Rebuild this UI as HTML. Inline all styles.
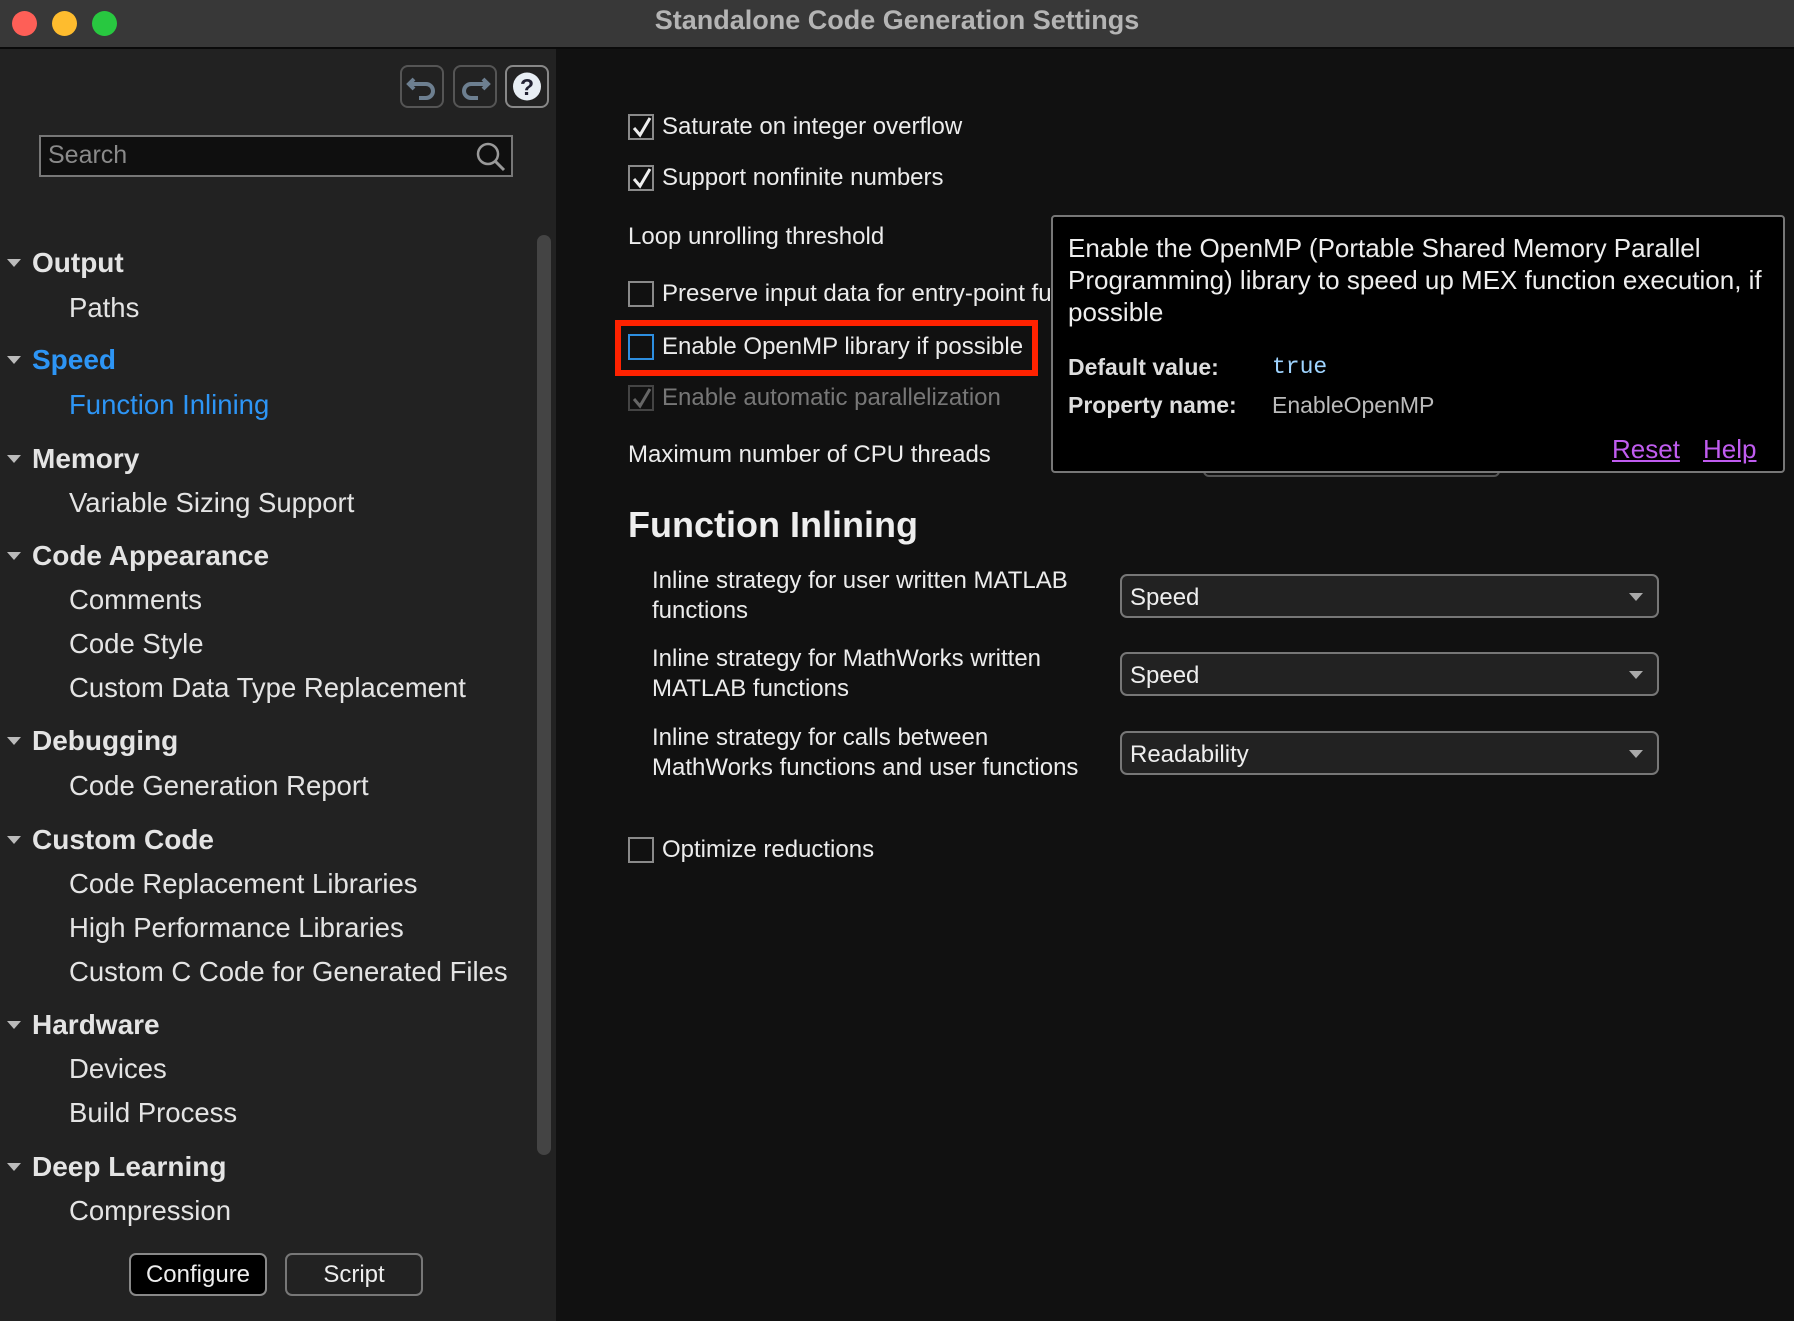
<!DOCTYPE html>
<html><head><meta charset="utf-8"><style>
*{margin:0;padding:0;box-sizing:border-box}
body{width:1794px;height:1321px;background:#111;font-family:"Liberation Sans",sans-serif;position:relative;overflow:hidden;color:#e6e6e6}
.a{position:absolute;white-space:nowrap}
#title{left:0;top:0;width:1794px;height:49px;background:#383838;border-bottom:2px solid #0a0a0a}
.dot{position:absolute;top:11px;width:25px;height:25px;border-radius:50%}
#side{left:0;top:49px;width:556px;height:1272px;background:#222}
.h{font-size:28px;font-weight:bold;color:#e4e4e4;left:32px;transform:translateY(-50%)}
.s{font-size:27.5px;color:#e4e4e4;left:69px;transform:translateY(-50%)}
.tri{position:absolute;left:7px;width:0;height:0;border-left:7px solid transparent;border-right:7px solid transparent;border-top:8px solid #bbb}
.m{font-size:24px;color:#ececec;transform:translateY(-50%)}
.cb{position:absolute;width:26px;height:26px;border:2px solid #8a8a8a;background:#111}
.cb svg{position:absolute;left:1px;top:0}
.dd{position:absolute;left:1120px;width:539px;height:44px;border:2px solid #777;border-radius:7px;background:#222;font-size:24px;color:#eee;padding:8px 8px}
.dd:after{content:"";position:absolute;right:14px;top:17px;border-left:7px solid transparent;border-right:7px solid transparent;border-top:8px solid #aaa}
.btn{position:absolute;width:44px;height:43px;border:2px solid #555;border-radius:8px}
</style></head><body>
<div id="title" class="a">
<div class="dot" style="left:12px;background:#fe5f57"></div>
<div class="dot" style="left:52px;background:#febc2e"></div>
<div class="dot" style="left:92px;background:#28c840"></div>
<div class="a" style="left:0;width:1794px;text-align:center;top:5px;font-size:27px;font-weight:bold;color:#b4b4b4">Standalone Code Generation Settings</div>
</div>
<div id="side" class="a"></div>
<div class="btn" style="left:400px;top:65px"><svg width="40" height="39" viewBox="0 0 40 39"><path d="M12 12 L7 17 L12 22 M7 17 H24 a7 7 0 0 1 0 14 H17" fill="none" stroke="#6d7f90" stroke-width="4"/></svg></div>
<div class="btn" style="left:453px;top:65px"><svg width="40" height="39" viewBox="0 0 40 39"><path d="M28 12 L33 17 L28 22 M33 17 H16 a7 7 0 0 0 0 14 H23" fill="none" stroke="#6d7f90" stroke-width="4"/></svg></div>
<div class="btn" style="left:505px;top:65px;border-color:#888"><svg width="40" height="39" viewBox="0 0 40 39"><circle cx="20" cy="19.5" r="14" fill="#e8eef4"/><text x="20" y="28" text-anchor="middle" font-size="23" font-weight="bold" fill="#223" font-family="Liberation Sans">?</text></svg></div>
<div class="a" style="left:39px;top:135px;width:474px;height:42px;border:2px solid #777;background:#0f0f0f"></div>
<div class="a" style="left:48px;top:141px;font-size:25px;color:#8a8a8a">Search</div>
<svg class="a" style="left:474px;top:140px" width="34" height="34" viewBox="0 0 34 34"><circle cx="14" cy="14" r="10" fill="none" stroke="#999" stroke-width="2.5"/><path d="M21 21 L30 30" stroke="#999" stroke-width="3"/></svg>
<div class="a" style="left:537px;top:235px;width:14px;height:920px;border-radius:7px;background:#444"></div>

<div class="tri" style="top:259px"></div><div class="a h" style="top:263px">Output</div>
<div class="a s" style="top:308px">Paths</div>
<div class="tri" style="top:356px"></div><div class="a h" style="top:360px;color:#2d95f5">Speed</div>
<div class="a s" style="top:405px;color:#2d95f5">Function Inlining</div>
<div class="tri" style="top:455px"></div><div class="a h" style="top:459px">Memory</div>
<div class="a s" style="top:503px">Variable Sizing Support</div>
<div class="tri" style="top:552px"></div><div class="a h" style="top:556px">Code Appearance</div>
<div class="a s" style="top:600px">Comments</div>
<div class="a s" style="top:644px">Code Style</div>
<div class="a s" style="top:688px">Custom Data Type Replacement</div>
<div class="tri" style="top:737px"></div><div class="a h" style="top:741px">Debugging</div>
<div class="a s" style="top:786px">Code Generation Report</div>
<div class="tri" style="top:836px"></div><div class="a h" style="top:840px">Custom Code</div>
<div class="a s" style="top:884px">Code Replacement Libraries</div>
<div class="a s" style="top:928px">High Performance Libraries</div>
<div class="a s" style="top:972px">Custom C Code for Generated Files</div>
<div class="tri" style="top:1021px"></div><div class="a h" style="top:1025px">Hardware</div>
<div class="a s" style="top:1069px">Devices</div>
<div class="a s" style="top:1113px">Build Process</div>
<div class="tri" style="top:1163px"></div><div class="a h" style="top:1167px">Deep Learning</div>
<div class="a s" style="top:1211px">Compression</div>
<div class="a" style="left:129px;top:1253px;width:138px;height:43px;border:2px solid #888;border-radius:7px;background:#000;font-size:24px;text-align:center;line-height:39px;color:#eee">Configure</div>
<div class="a" style="left:285px;top:1253px;width:138px;height:43px;border:2px solid #777;border-radius:7px;background:#222;font-size:24px;text-align:center;line-height:39px;color:#eee">Script</div>

<!-- main -->
<div class="cb" style="left:628px;top:114px"><svg width="22" height="22"><path d="M3 12 L9 19 L19 2" fill="none" stroke="#eee" stroke-width="3"/></svg></div>
<div class="a m" style="left:662px;top:127px">Saturate on integer overflow</div>
<div class="cb" style="left:628px;top:165px"><svg width="22" height="22"><path d="M3 12 L9 19 L19 2" fill="none" stroke="#eee" stroke-width="3"/></svg></div>
<div class="a m" style="left:662px;top:178px">Support nonfinite numbers</div>
<div class="a m" style="left:628px;top:237px">Loop unrolling threshold</div>
<div class="cb" style="left:628px;top:281px"></div>
<div class="a m" style="left:662px;top:294px">Preserve input data for entry-point fu</div>
<div class="a" style="left:615px;top:320px;width:423px;height:56px;border:6px solid #ff2200"></div>
<div class="cb" style="left:628px;top:334px;border-color:#2d8ee0"></div>
<div class="a m" style="left:662px;top:347px">Enable OpenMP library if possible</div>
<div class="cb" style="left:628px;top:385px;border-color:#444"><svg width="22" height="22"><path d="M3 12 L9 19 L19 2" fill="none" stroke="#666" stroke-width="3"/></svg></div>
<div class="a m" style="left:662px;top:398px;color:#777">Enable automatic parallelization</div>
<div class="a m" style="left:628px;top:455px">Maximum number of CPU threads</div>
<div class="a" style="left:1203px;top:440px;width:297px;height:37px;border:2px solid #555;border-radius:6px"></div>

<div class="a" style="left:1051px;top:215px;width:734px;height:258px;background:#000;border:2px solid #777;border-radius:4px"></div>
<div class="a" style="left:1068px;top:232px;font-size:26px;line-height:32px;color:#eee">Enable the OpenMP (Portable Shared Memory Parallel<br>Programming) library to speed up MEX function execution, if<br>possible</div>
<div class="a" style="left:1068px;top:354px;font-size:23px;font-weight:bold;color:#ddd">Default value:</div>
<div class="a" style="left:1272px;top:354px;font-size:23px;font-family:'Liberation Mono',monospace;color:#9fd4ff">true</div>
<div class="a" style="left:1068px;top:392px;font-size:23px;font-weight:bold;color:#ddd">Property name:</div>
<div class="a" style="left:1272px;top:392px;font-size:23px;color:#bbb">EnableOpenMP</div>
<div class="a" style="left:1612px;top:434px;font-size:26px;color:#c05cf0;text-decoration:underline">Reset</div>
<div class="a" style="left:1703px;top:434px;font-size:26px;color:#c05cf0;text-decoration:underline">Help</div>

<div class="a" style="left:628px;top:504px;font-size:36px;font-weight:bold;color:#eee">Function Inlining</div>
<div class="a" style="left:652px;top:566px;font-size:24px;line-height:30px;color:#ececec">Inline strategy for user written MATLAB<br>functions</div>
<div class="dd" style="top:574px">Speed</div>
<div class="a" style="left:652px;top:644px;font-size:24px;line-height:30px;color:#ececec">Inline strategy for MathWorks written<br>MATLAB functions</div>
<div class="dd" style="top:652px">Speed</div>
<div class="a" style="left:652px;top:723px;font-size:24px;line-height:30px;color:#ececec">Inline strategy for calls between<br>MathWorks functions and user functions</div>
<div class="dd" style="top:731px">Readability</div>
<div class="cb" style="left:628px;top:837px"></div>
<div class="a m" style="left:662px;top:850px">Optimize reductions</div>
</body></html>
